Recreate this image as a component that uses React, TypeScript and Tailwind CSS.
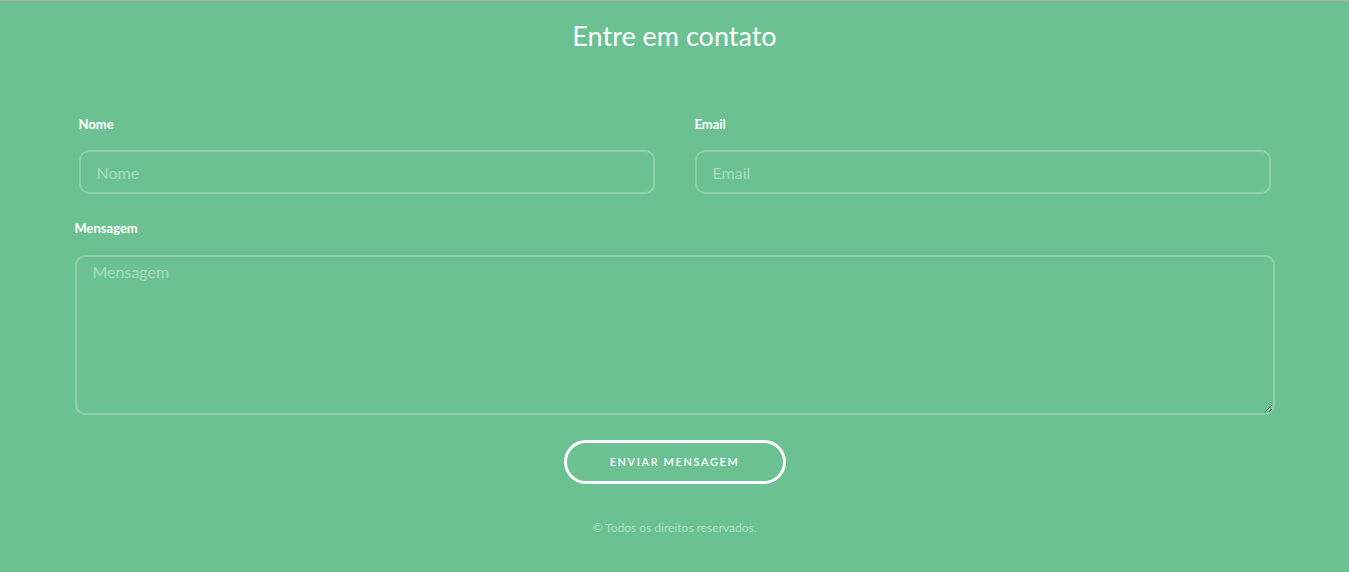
import React from "react";

export default function App() {
  const font = { fontFamily: '"Source Sans Pro", Lato, "Open Sans", sans-serif' };
  return (
    <div className="min-h-screen w-full bg-[#6cc193] border-t border-[#b0b0b0] text-white" style={font}>
      <div className="mx-auto w-[1200px]">
        <h2 className="pt-[18px] text-center text-[27px] leading-[34px] font-normal text-white">Entre em contato</h2>
        <form className="mt-[46px]" onSubmit={(e) => e.preventDefault()}>
          <div className="grid grid-cols-2 gap-x-[40px] px-[4px]">
            <div className="flex flex-col">
              <label className="text-[13px] font-bold leading-[16px] mt-[17px]">Nome</label>
              <input
                placeholder="Nome"
                className="mt-[18px] h-[44px] rounded-[10px] border-2 border-white/25 bg-transparent px-[16px] text-[16px] text-white outline-none placeholder:text-[#a9dcc1]"
              />
            </div>
            <div className="flex flex-col">
              <label className="text-[13px] font-bold leading-[16px] mt-[17px]">Email</label>
              <input
                placeholder="Email"
                className="mt-[18px] h-[44px] rounded-[10px] border-2 border-white/25 bg-transparent px-[16px] text-[16px] text-white outline-none placeholder:text-[#a9dcc1]"
              />
            </div>
          </div>
          <div className="flex flex-col mt-[26px]">
            <label className="text-[13px] font-bold leading-[16px]">Mensagem</label>
            <textarea
              placeholder="Mensagem"
              className="mt-[19px] h-[160px] rounded-[10px] border-2 border-white/25 bg-transparent px-[16px] pt-[3px] text-[16px] text-white outline-none placeholder:text-[#a9dcc1]"
            />
          </div>
          <div className="flex justify-center mt-[25px]">
            <button
              type="submit"
              className="h-[44px] w-[222px] rounded-full border-[3px] border-white bg-transparent text-[11px] font-semibold tracking-[1.6px] text-white"
            >
              ENVIAR MENSAGEM
            </button>
          </div>
        </form>
        <p className="mt-[35px] text-center text-[12px] text-[#b3e0c6]">© Todos os direitos reservados.</p>
      </div>
    </div>
  );
}
